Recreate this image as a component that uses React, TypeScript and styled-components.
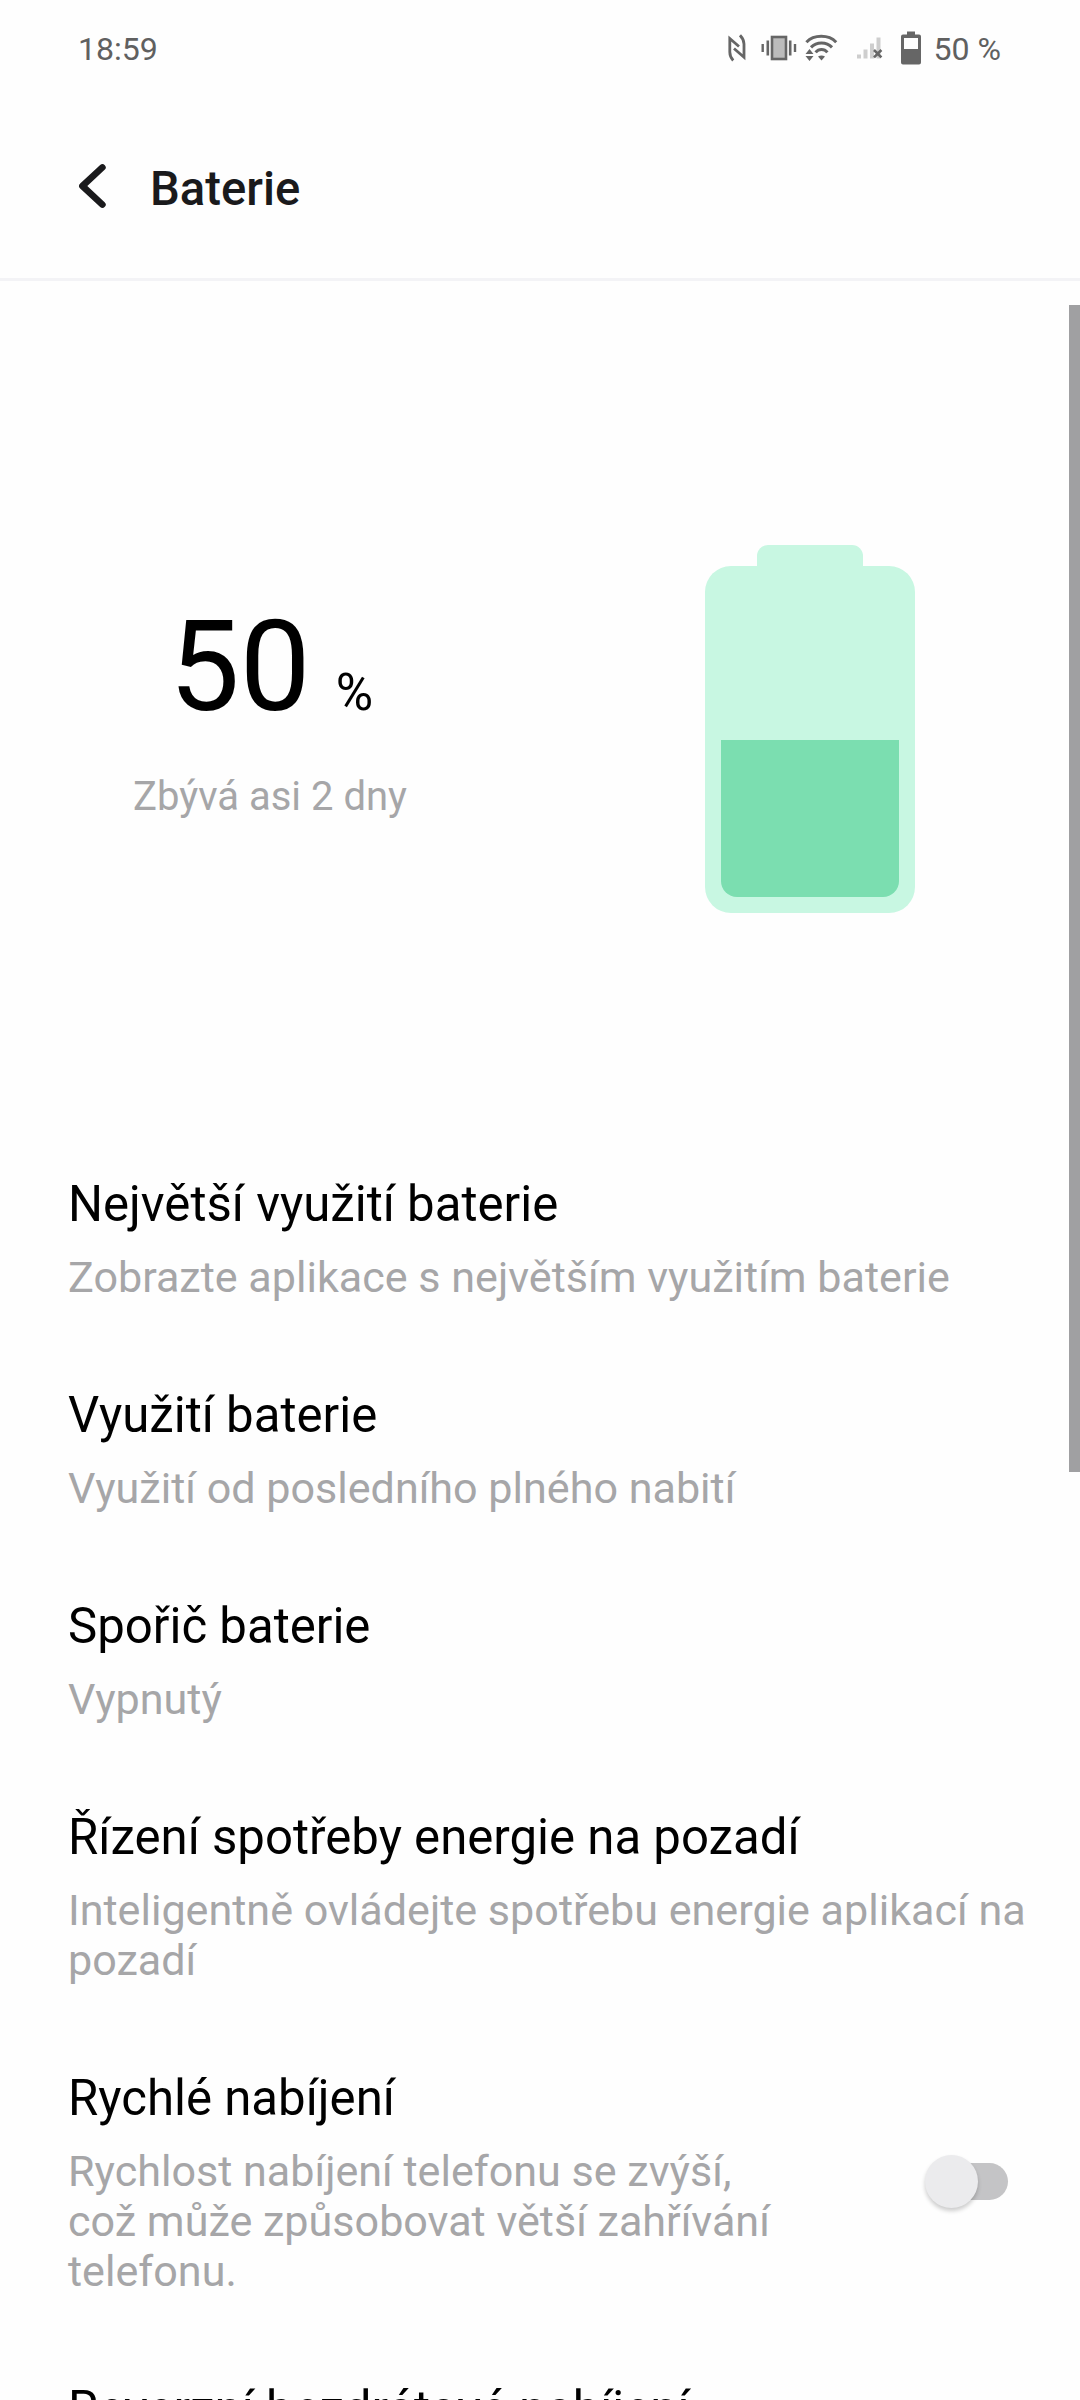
import React from "react";
import styled, { createGlobalStyle } from "styled-components";

const GlobalStyle = createGlobalStyle`
  *, *::before, *::after { box-sizing: border-box; }
  html, body { margin: 0; padding: 0; background: #fefefe; }
  body { overflow: hidden; }
`;

const Screen = styled.div`
  position: relative;
  display: flex;
  flex-direction: column;
  width: 1080px;
  height: 2400px;
  overflow: hidden;
  background: #fefefe;
  font-family: Roboto, "Noto Sans", sans-serif;
  color: #000;
`;

const StatusBar = styled.header`
  display: flex;
  align-items: center;
  justify-content: space-between;
  flex: none;
  height: 98px;
  padding: 0 79px 0 78px;
  color: #606060;
  font-size: 32.1px;
  line-height: 38px;
`;

const StatusText = styled.span`
  white-space: nowrap;
`;

const StatusIcons = styled.div`
  display: flex;
  align-items: center;
`;

const StatusIcon = styled.svg<{ $gap: number }>`
  display: block;
  flex: none;
  margin-right: ${(p) => p.$gap}px;
  margin-bottom: 3px;
`;

const TitleBar = styled.div`
  display: flex;
  align-items: center;
  flex: none;
  height: 183px;
  padding: 0 78px 4px;
  border-bottom: 3px solid #f3f3f6;
`;

const BackButton = styled.button`
  display: flex;
  padding: 0;
  margin-right: 44px;
  border: 0;
  background: none;
  color: #1a1a1c;
`;

const PageTitle = styled.h1`
  margin: 6px 0 0;
  font-size: 47.2px;
  line-height: 56px;
  font-weight: 500;
  color: #1a1a1c;
`;

const Hero = styled.section`
  display: flex;
  flex: none;
  height: 869px;
  padding-top: 264px;
`;

const HeroHalf = styled.div`
  display: flex;
  flex-direction: column;
  align-items: center;
  flex: 1;
`;

const Charge = styled.div`
  display: flex;
  align-items: baseline;
  margin-top: 48px;
  padding-left: 2px;
  font-size: 126px;
  line-height: 148px;
`;

const ChargeUnit = styled.span`
  margin-left: 25px;
  font-size: 51px;
  line-height: 60px;
`;

const Remaining = styled.div`
  margin-top: 32px;
  font-size: 40px;
  line-height: 48px;
  color: #a6a6a8;
`;

const BatteryCap = styled.div`
  width: 106px;
  height: 21px;
  border-radius: 11px 11px 0 0;
  background: #c8f7e2;
`;

const BatteryBody = styled.div`
  display: flex;
  align-items: flex-end;
  width: 210px;
  height: 347px;
  padding: 16px;
  border-radius: 26px;
  background: #c8f7e2;
`;

const BatteryLevel = styled.div`
  width: 100%;
  border-radius: 0 0 16px 16px;
  background: #7bdeb0;
`;

const List = styled.main`
  display: flex;
  flex-direction: column;
`;

const Row = styled.section`
  display: flex;
  align-items: center;
  justify-content: space-between;
  flex: none;
  padding: 25px 50px 58px 68px;
`;

const RowText = styled.div<{ $narrow?: boolean }>`
  width: ${(p) => (p.$narrow ? "720px" : "100%")};
`;

const RowTitle = styled.h2`
  margin: 0 0 20px;
  font-size: 49.15px;
  line-height: 58px;
  font-weight: 400;
  white-space: nowrap;
`;

const RowNote = styled.p`
  margin: 0;
  font-size: 43.1px;
  line-height: 50px;
  color: #a6a6a8;
`;

const Switch = styled.button`
  display: flex;
  align-items: center;
  width: 82px;
  height: 37px;
  margin: 0 22px 3px 0;
  padding: 0;
  border: 0;
  border-radius: 19px;
  background: #c4c4c6;
`;

const Knob = styled.span`
  flex: none;
  width: 53px;
  height: 53px;
  margin-left: -1px;
  border-radius: 50%;
  background: #ebebed;
  box-shadow: 0 3px 4px rgba(0, 0, 0, 0.2);
`;

const ScrollThumb = styled.div`
  position: absolute;
  top: 305px;
  right: 0;
  width: 11px;
  height: 1167px;
  background: #a0a0a2;
`;

const rows = [
  { title: "Největší využití baterie", note: "Zobrazte aplikace s největším využitím baterie" },
  { title: "Využití baterie", note: "Využití od posledního plného nabití" },
  { title: "Spořič baterie", note: "Vypnutý" },
  { title: "Řízení spotřeby energie na pozadí", note: "Inteligentně ovládejte spotřebu energie aplikací na pozadí" },
  {
    title: "Rychlé nabíjení",
    note: "Rychlost nabíjení telefonu se zvýší, což může způsobovat větší zahřívání telefonu.",
    toggle: true,
  },
  { title: "Reverzní bezdrátové nabíjení", note: "" },
];

const NfcIcon = () => (
  <StatusIcon $gap={15} width="18" height="28" viewBox="0 0 18 28" fill="none" stroke="#666" strokeWidth="2.8">
    <path d="M5.2 26.5 C2.5 23.5 1.8 21.5 1.8 18 V4.5 L11 12.5" />
    <path d="M12 1.3 C15 4.5 16 6.5 16 10 V23.2 L6 14.5" />
  </StatusIcon>
);

const VibrateIcon = () => (
  <StatusIcon $gap={8} width="36" height="26" viewBox="0 0 36 26" fill="#666">
    <rect x="11" y="2" width="14" height="22" fill="#bcbcbc" stroke="#666" strokeWidth="2.6" />
    <rect x="0.5" y="9" width="2.4" height="8" />
    <rect x="5.5" y="5.5" width="2.6" height="15" />
    <rect x="27.9" y="5.5" width="2.6" height="15" />
    <rect x="32.8" y="9" width="2.4" height="8" />
  </StatusIcon>
);

const WifiIcon = () => (
  <StatusIcon $gap={19} width="33" height="28" viewBox="0 0 33 28" fill="#666">
    <g fill="none" stroke="#666" strokeWidth="3">
      <path d="M1.4 8.2 C9 0.4 23.6 0.4 31.2 8.2" />
      <path d="M6 13.4 C11.5 7.6 21.5 7.6 27 13.4" />
      <path d="M10.6 18.4 C13.8 14.6 19.2 14.6 22.4 18.4" />
    </g>
    <path d="M13 22.4 Q16.5 20.4 20 22.4 L16.5 26.6 Z" />
    <path d="M0.5 20 L4.5 15 L8.5 20 Z M0.5 22 H8.5 L4.5 27 Z" />
  </StatusIcon>
);

const SignalIcon = () => (
  <StatusIcon $gap={18} width="26" height="22" viewBox="0 0 26 22" fill="#cecece">
    <rect x="0" y="17.5" width="4" height="4" />
    <rect x="6.5" y="12.5" width="4" height="9" />
    <rect x="13" y="6.5" width="4" height="15" />
    <rect x="19.5" y="0.5" width="4" height="21" />
    <path d="M17 13 L24.4 20.4 M24.4 13 L17 20.4" stroke="#666" strokeWidth="2.6" />
  </StatusIcon>
);

const BatteryIcon = () => (
  <StatusIcon $gap={12} width="20" height="34" viewBox="0 0 20 34" fill="#666">
    <path
      fillRule="evenodd"
      d="M6 0.5 H14 V3.5 H18 Q20 3.5 20 5.5 V31.5 Q20 33.5 18 33.5 H2 Q0 33.5 0 31.5 V5.5 Q0 3.5 2 3.5 H6 Z M3 7 V18 H17 V7 Z"
    />
  </StatusIcon>
);

export default function App() {
  const level = 50;
  return (
    <>
      <GlobalStyle />
      <Screen>
        <StatusBar>
          <StatusText>18:59</StatusText>
          <StatusIcons>
            <NfcIcon />
            <VibrateIcon />
            <WifiIcon />
            <SignalIcon />
            <BatteryIcon />
            <StatusText>{level} %</StatusText>
          </StatusIcons>
        </StatusBar>
        <TitleBar>
          <BackButton aria-label="Zpět">
            <svg width="28" height="46" viewBox="0 0 28 46" fill="none" stroke="currentColor" strokeWidth="6.6" strokeLinecap="round" strokeLinejoin="round">
              <path d="M24.4 4.4 L4.4 23 L24.4 41.6" />
            </svg>
          </BackButton>
          <PageTitle>Baterie</PageTitle>
        </TitleBar>
        <Hero>
          <HeroHalf>
            <Charge>
              {level}
              <ChargeUnit>%</ChargeUnit>
            </Charge>
            <Remaining>Zbývá asi 2 dny</Remaining>
          </HeroHalf>
          <HeroHalf>
            <BatteryCap />
            <BatteryBody>
              <BatteryLevel style={{ height: `${level}%` }} />
            </BatteryBody>
          </HeroHalf>
        </Hero>
        <List>
          {rows.map((row) => (
            <Row key={row.title}>
              <RowText $narrow={row.toggle}>
                <RowTitle>{row.title}</RowTitle>
                {row.note && <RowNote>{row.note}</RowNote>}
              </RowText>
              {row.toggle && (
                <Switch role="switch" aria-checked={false} aria-label={row.title}>
                  <Knob />
                </Switch>
              )}
            </Row>
          ))}
        </List>
        <ScrollThumb />
      </Screen>
    </>
  );
}
